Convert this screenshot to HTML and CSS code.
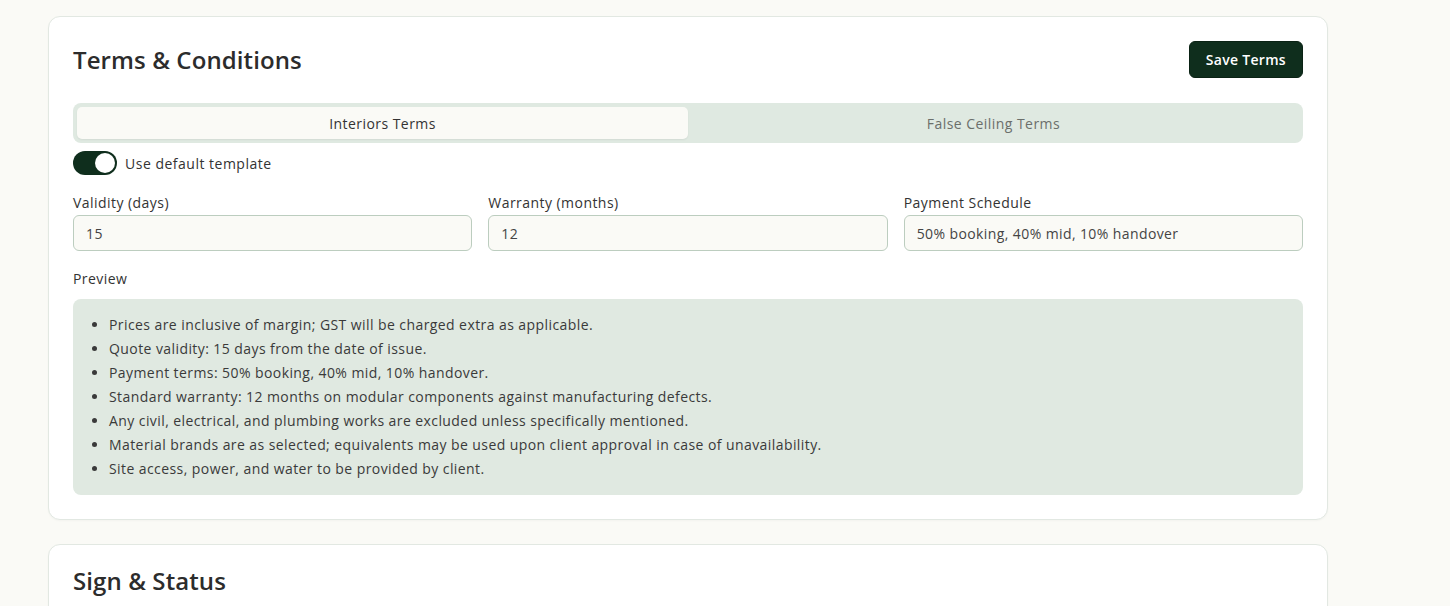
FILE: index.html
```html
<!DOCTYPE html>
<html lang="en">
<head>
<meta charset="utf-8">
<title>Terms &amp; Conditions</title>
<link rel="stylesheet" href="styles.css">
</head>
<body>
<main class="page">
  <section class="card">
    <div class="card-head">
      <h2 class="card-title">Terms &amp; Conditions</h2>
      <button class="btn-primary" type="button">Save Terms</button>
    </div>
    <div class="tabs">
      <button class="tab tab-active" type="button">Interiors Terms</button>
      <button class="tab" type="button">False Ceiling Terms</button>
    </div>
    <label class="switch-row">
      <span class="switch"><span class="knob"></span></span>
      <span class="switch-label">Use default template</span>
    </label>
    <div class="fields">
      <div class="field">
        <label class="field-label">Validity (days)</label>
        <input class="input" type="text" value="15">
      </div>
      <div class="field">
        <label class="field-label">Warranty (months)</label>
        <input class="input" type="text" value="12">
      </div>
      <div class="field">
        <label class="field-label">Payment Schedule</label>
        <input class="input" type="text" value="50% booking, 40% mid, 10% handover">
      </div>
    </div>
    <div class="preview-label">Preview</div>
    <div class="preview">
      <ul class="preview-list">
        <li>Prices are inclusive of margin; GST will be charged extra as applicable.</li>
        <li>Quote validity: 15 days from the date of issue.</li>
        <li>Payment terms: 50% booking, 40% mid, 10% handover.</li>
        <li>Standard warranty: 12 months on modular components against manufacturing defects.</li>
        <li>Any civil, electrical, and plumbing works are excluded unless specifically mentioned.</li>
        <li>Material brands are as selected; equivalents may be used upon client approval in case of unavailability.</li>
        <li>Site access, power, and water to be provided by client.</li>
      </ul>
    </div>
  </section>
  <section class="card">
    <div class="card-head card-head-plain">
      <h2 class="card-title">Sign &amp; Status</h2>
    </div>
  </section>
</main>
</body>
</html>
```
FILE: styles.css
```css
* { box-sizing: border-box; }
html, body { margin: 0; padding: 0; }
body {
  background: #fafaf6;
  font-family: "Open Sans", "Liberation Sans", sans-serif;
  color: #3a3a3a;
  height: 606px;
  overflow: hidden;
}
.page {
  width: 1280px;
  margin-left: 48px;
  padding-top: 16px;
  display: flex;
  flex-direction: column;
  gap: 24px;
}
.card {
  background: #ffffff;
  border: 1px solid #e2e8e2;
  border-radius: 12px;
  padding: 24px;
  box-shadow: 0 1px 2px rgba(0,0,0,0.03);
}
.card-head {
  display: flex;
  justify-content: space-between;
  align-items: center;
  height: 37px;
  margin-bottom: 25px;
}
.card-head-plain {
  height: auto;
}
.card-title {
  margin: 0;
  font-size: 24px;
  line-height: 24px;
  font-weight: 600;
  color: #2c2c2c;
  letter-spacing: 0.1px;
}
.btn-primary {
  height: 37px;
  padding: 0 16px;
  background: #0f2e1d;
  color: #ffffff;
  border: 1px solid #0a2214;
  border-radius: 6px;
  font-family: inherit;
  font-size: 14px;
  font-weight: 600;
  letter-spacing: 0.3px;
}
.tabs {
  display: grid;
  grid-template-columns: 1fr 1fr;
  background: #dfe9e1;
  border-radius: 8px;
  padding: 4px;
  height: 40px;
}
.tab {
  border: 0;
  background: transparent;
  font-family: inherit;
  font-size: 14px;
  letter-spacing: 0.45px;
  color: #6b6f6b;
  border-radius: 5px;
  padding: 0;
}
.tab-active {
  background: #fafaf6;
  color: #333333;
  box-shadow: 0 1px 2px rgba(0,0,0,0.06);
}
.switch-row {
  display: flex;
  align-items: center;
  gap: 8px;
  margin-top: 8px;
  height: 24px;
}
.switch {
  width: 44px;
  height: 24px;
  border-radius: 12px;
  background: #0f2e1d;
  position: relative;
  display: inline-block;
}
.knob {
  position: absolute;
  right: 2px;
  top: 2px;
  width: 20px;
  height: 20px;
  border-radius: 50%;
  background: #ffffff;
}
.switch-label {
  font-size: 14px;
  letter-spacing: 0.5px;
  color: #333333;
}
.fields {
  display: grid;
  grid-template-columns: repeat(3, 1fr);
  gap: 16px;
  margin-top: 18px;
}
.field {
  display: flex;
  flex-direction: column;
  gap: 2px;
}
.field-label {
  font-size: 14px;
  line-height: 20px;
  letter-spacing: 0.45px;
  color: #333333;
}
.input {
  height: 36px;
  border: 1px solid #bccdbf;
  border-radius: 6px;
  background: #fafaf6;
  padding: 0 12px;
  font-family: inherit;
  font-size: 14px;
  letter-spacing: 0.4px;
  color: #444444;
}
.preview-label {
  margin-top: 18px;
  font-size: 14px;
  line-height: 20px;
  letter-spacing: 0.45px;
  color: #333333;
}
.preview {
  margin-top: 10px;
  background: #e0e9e1;
  border-radius: 8px;
  padding: 16px;
}
.preview-list {
  margin: 0;
  padding-left: 20px;
  display: flex;
  flex-direction: column;
  gap: 4px;
}
.preview-list li {
  font-size: 14px;
  line-height: 20px;
  letter-spacing: 0.42px;
  color: #3a3a3a;
}
```
